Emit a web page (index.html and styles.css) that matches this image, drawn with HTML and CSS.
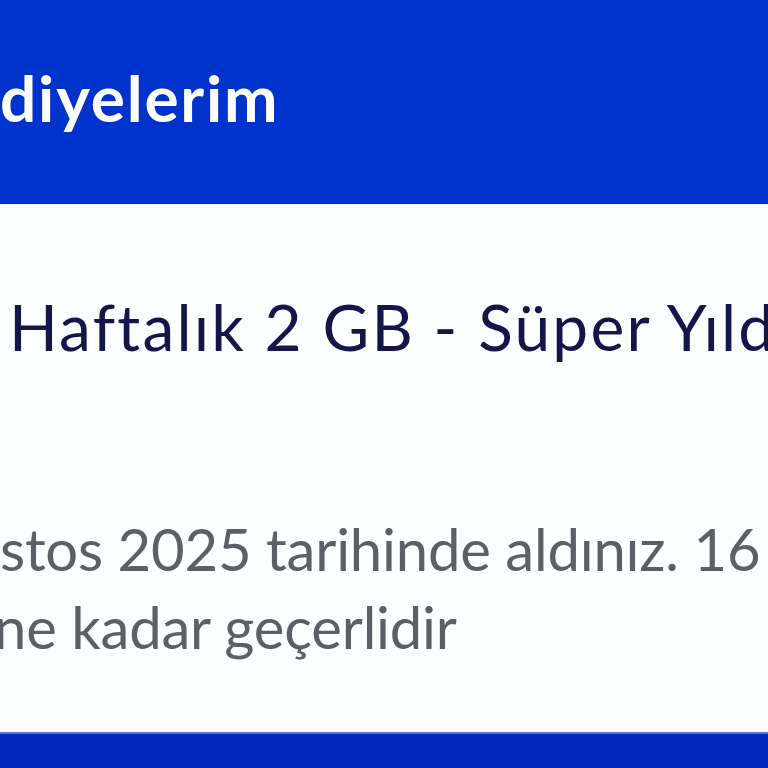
FILE: index.html
```html
<!DOCTYPE html>
<html lang="tr">
<head>
<meta charset="utf-8">
<link rel="stylesheet" href="styles.css">
</head>
<body>
<div class="page">
  <header class="topbar">
    <h1 class="title">diyelerim</h1>
  </header>
  <main class="card">
    <div class="gift-name">Haftalık 2 GB - Süper Yıldız</div>
    <div class="gift-desc">
      <div class="line">stos 2025 tarihinde aldınız. 16</div>
      <div class="line line-cut">ne kadar geçerlidir</div>
    </div>
  </main>
  <footer class="bottombar"></footer>
</div>
</body>
</html>
```
FILE: styles.css
```css
html, body {
  margin: 0;
  padding: 0;
  width: 768px;
  height: 768px;
  overflow: hidden;
  background: #ffffff;
}
.page {
  display: flex;
  flex-direction: column;
  width: 768px;
  height: 768px;
  overflow: hidden;
  font-family: Lato, "Liberation Sans", sans-serif;
}
.topbar {
  height: 204px;
  flex: 0 0 204px;
  background: #0033cc;
  box-sizing: border-box;
  padding-top: 63px;
}
.title {
  margin: 0;
  font-size: 64px;
  line-height: 70px;
  font-weight: 700;
  letter-spacing: 1.8px;
  color: #ffffff;
  white-space: nowrap;
}
.card {
  flex: 1 1 auto;
  background: #fdfeff;
  padding-top: 88px;
  overflow: hidden;
}
.gift-name {
  margin-left: 9px;
  font-size: 64px;
  line-height: 70px;
  letter-spacing: 2.2px;
  color: #15154a;
  white-space: nowrap;
}
.gift-desc {
  margin-top: 148px;
  color: #5b6067;
  font-size: 58px;
  line-height: 78px;
  letter-spacing: -0.2px;
}
.line {
  white-space: nowrap;
}
.line-cut {
  margin-left: -6px;
}
.bottombar {
  flex: 0 0 36px;
  height: 36px;
  background: #0028bb;
  border-top: 2px solid #5d78d6;
  box-sizing: border-box;
}
```
